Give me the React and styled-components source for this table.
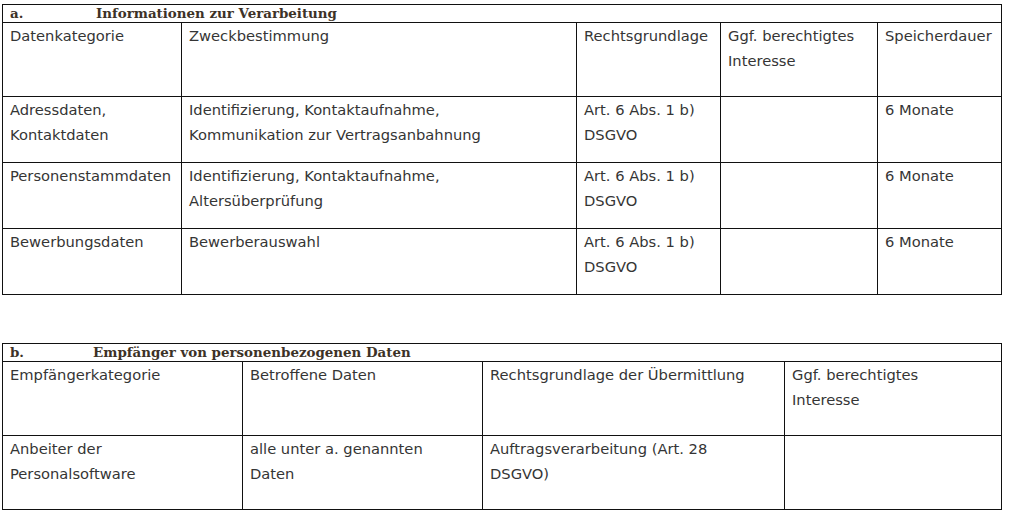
import styled, { createGlobalStyle } from "styled-components";

const GlobalStyle = createGlobalStyle`
  body {
    margin: 0;
    background: #fff;
  }
`;

// each cell is a list of lines, broken as in the source document
const sectionA = {
  label: "a.",
  title: "Informationen zur Verarbeitung",
  titleOffset: 95,
  cols: [179, 395, 144, 157, 124],
  head: [
    ["Datenkategorie"],
    ["Zweckbestimmung"],
    ["Rechtsgrundlage"],
    ["Ggf. berechtigtes", "Interesse"],
    ["Speicherdauer"],
  ],
  headHeight: 74,
  rowHeight: 66,
  rows: [
    [
      ["Adressdaten,", "Kontaktdaten"],
      ["Identifizierung, Kontaktaufnahme,", "Kommunikation zur Vertragsanbahnung"],
      ["Art. 6 Abs. 1 b)", "DSGVO"],
      [],
      ["6 Monate"],
    ],
    [
      ["Personenstammdaten"],
      ["Identifizierung, Kontaktaufnahme,", "Altersüberprüfung"],
      ["Art. 6 Abs. 1 b)", "DSGVO"],
      [],
      ["6 Monate"],
    ],
    [
      ["Bewerbungsdaten"],
      ["Bewerberauswahl"],
      ["Art. 6 Abs. 1 b)", "DSGVO"],
      [],
      ["6 Monate"],
    ],
  ],
};

const sectionB = {
  label: "b.",
  title: "Empfänger von personenbezogenen Daten",
  titleOffset: 92,
  cols: [240, 240, 302, 217],
  head: [
    ["Empfängerkategorie"],
    ["Betroffene Daten"],
    ["Rechtsgrundlage der Übermittlung"],
    ["Ggf. berechtigtes", "Interesse"],
  ],
  headHeight: 74,
  rowHeight: 74,
  rows: [
    [
      ["Anbeiter der", "Personalsoftware"],
      ["alle unter a. genannten", "Daten"],
      ["Auftragsverarbeitung (Art. 28", "DSGVO)"],
      [],
    ],
  ],
};

const Lines = ({ lines }) =>
  lines.map((l, i) => <Line key={i}>{l}</Line>);

const Section = ({ data }) => (
  <Table>
    <colgroup>
      {data.cols.map((w, i) => (
        <col key={i} style={{ width: w }} />
      ))}
    </colgroup>
    <tbody>
      <tr>
        <TitleCell colSpan={data.cols.length}>
          <TitleLabel $width={data.titleOffset}>{data.label}</TitleLabel>
          {data.title}
        </TitleCell>
      </tr>
      <tr>
        {data.head.map((h, i) => (
          <Cell key={i} $height={data.headHeight}>
            <Lines lines={h} />
          </Cell>
        ))}
      </tr>
      {data.rows.map((row, r) => (
        <tr key={r}>
          {row.map((c, i) => (
            <Cell key={i} $height={data.rowHeight}>
              <Lines lines={c} />
            </Cell>
          ))}
        </tr>
      ))}
    </tbody>
  </Table>
);

export default function App() {
  return (
    <>
      <GlobalStyle />
      <Page>
        <Section data={sectionA} />
        <Section data={sectionB} />
      </Page>
    </>
  );
}

const Page = styled.div`
  display: flex;
  flex-direction: column;
  gap: 48px;
  padding: 4px 0 0 2px;
`;

const Table = styled.table`
  width: 999px;
  border-collapse: collapse;
  table-layout: fixed;
  font-family: "DejaVu Sans", Verdana, sans-serif;
  font-size: 14.7px;
  color: #353535;
`;

const TitleCell = styled.td`
  border: 1px solid #111;
  height: 17px;
  padding: 0 7px;
  font-family: "DejaVu Serif", Georgia, serif;
  font-weight: bold;
  font-size: 13.4px;
  line-height: 17px;
  color: #3d3227;
  vertical-align: middle;
  white-space: nowrap;
`;

const TitleLabel = styled.span`
  display: inline-block;
  width: ${(p) => p.$width - 9}px;
`;

const Cell = styled.td`
  border: 1px solid #111;
  height: ${(p) => p.$height}px;
  padding: 0 7px;
  line-height: 25px;
  vertical-align: top;
  box-sizing: border-box;
`;

const Line = styled.div`
  white-space: nowrap;
`;
